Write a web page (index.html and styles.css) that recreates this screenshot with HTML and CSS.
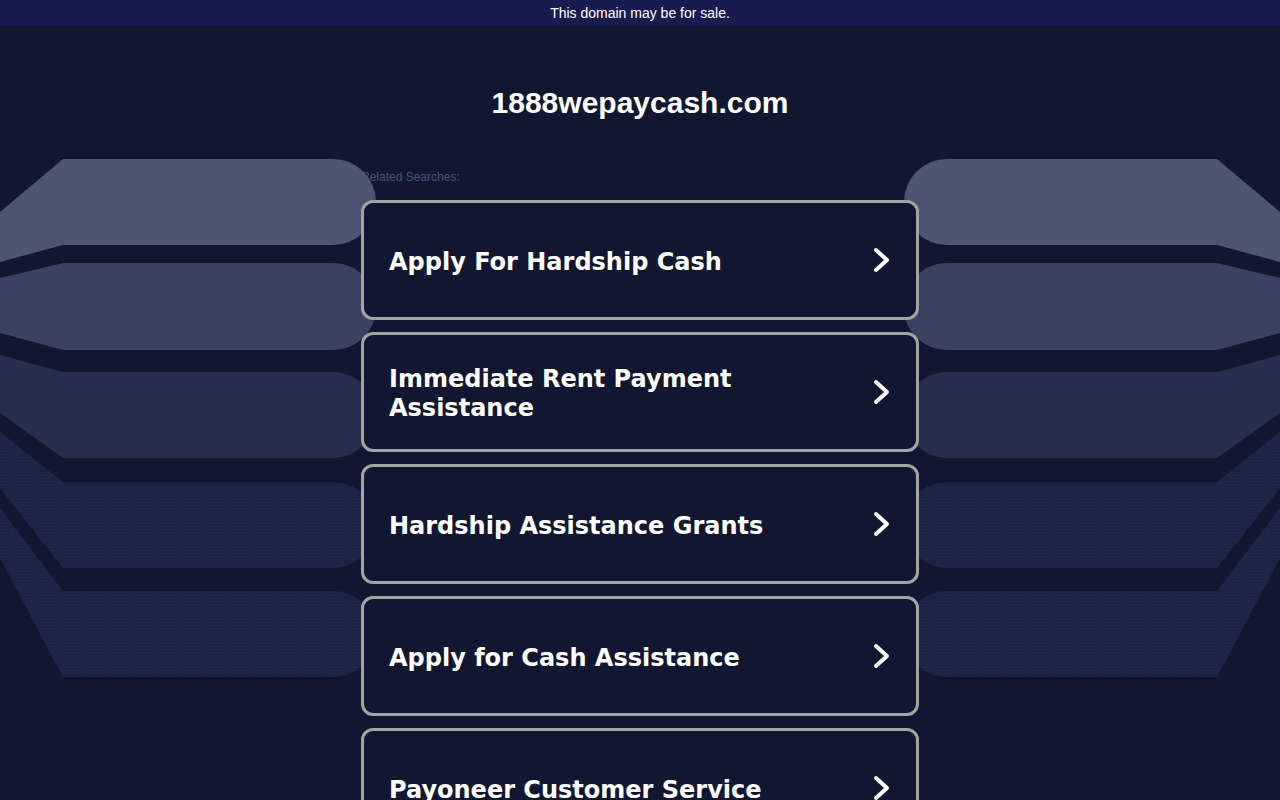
FILE: index.html
```html
<!DOCTYPE html>
<html lang="en">
<head>
<meta charset="utf-8">
<title>1888wepaycash.com</title>
<link rel="stylesheet" href="styles.css">
</head>
<body>
<svg class="backdrop" viewBox="0 0 1280 800" width="1280" height="800" aria-hidden="true">
  <defs>
    <pattern id="dots" width="3" height="3" patternUnits="userSpaceOnUse">
      <rect width="3" height="3" fill="#1b2447"/>
      <rect x="1" y="1" width="1" height="1" fill="#222b52"/>
    </pattern>
    <g id="bands">
      <path d="M0,212 L63,159 L333,159 A43,43 0 0 1 333,245 L63,245 L0,262 Z" fill="#4c5673"/>
      <path d="M0,278 L63,263 L333,263 A43,43 0 0 1 333,350 L63,350 L0,333 Z" fill="#3a4261"/>
      <path d="M0,355 L63,372 L333,372 A43,43 0 0 1 333,458 L63,458 L0,413 Z" fill="#272f4e"/>
      <path d="M0,432 L63,482 L333,482 A43,43 0 0 1 333,568 L63,568 L0,488 Z" fill="url(#dots)"/>
      <path d="M0,508 L63,591 L333,591 A43,43 0 0 1 333,677 L63,677 L0,558 Z" fill="url(#dots)"/>
    </g>
  </defs>
  <use href="#bands"/>
  <use href="#bands" transform="translate(1280,0) scale(-1,1)"/>
</svg>

<div class="topbar">This domain may be for sale.</div>

<h1 class="title">1888wepaycash.com</h1>

<div class="related">Related Searches:</div>

<div class="cards">
  <a class="card" href="#"><span class="label">Apply For Hardship Cash</span><svg class="chev" viewBox="0 0 20 30" width="20" height="30"><polyline points="4,5 15,15 4,25"/></svg></a>
  <a class="card" href="#"><span class="label">Immediate Rent Payment Assistance</span><svg class="chev" viewBox="0 0 20 30" width="20" height="30"><polyline points="4,5 15,15 4,25"/></svg></a>
  <a class="card" href="#"><span class="label">Hardship Assistance Grants</span><svg class="chev" viewBox="0 0 20 30" width="20" height="30"><polyline points="4,5 15,15 4,25"/></svg></a>
  <a class="card" href="#"><span class="label">Apply for Cash Assistance</span><svg class="chev" viewBox="0 0 20 30" width="20" height="30"><polyline points="4,5 15,15 4,25"/></svg></a>
  <a class="card" href="#"><span class="label">Payoneer Customer Service</span><svg class="chev" viewBox="0 0 20 30" width="20" height="30"><polyline points="4,5 15,15 4,25"/></svg></a>
</div>
</body>
</html>
```
FILE: styles.css
```css
html {
  overflow: hidden;
}
body {
  margin: 0;
  background: #111730;
  font-family: "Liberation Sans", Arial, sans-serif;
  color: #fff;
  min-height: 800px;
}
.backdrop {
  position: absolute;
  top: 0;
  left: 0;
  pointer-events: none;
}
.topbar {
  position: relative;
  height: 26px;
  line-height: 26px;
  background: #161b50;
  text-align: center;
  font-size: 14px;
  color: #fff;
}
.title {
  margin: 59px 0 0;
  text-align: center;
  font-size: 30px;
  line-height: 36px;
  font-weight: bold;
}
.related {
  width: 558px;
  margin: 49px auto 16px;
  font-size: 12px;
  line-height: 14px;
  color: #4a5478;
}
.cards {
  position: relative;
  z-index: 1;
  width: 558px;
  margin: 0 auto;
  display: flex;
  flex-direction: column;
  gap: 12px;
}
.card {
  box-sizing: border-box;
  height: 120px;
  border: 3px solid #a3a3a3;
  border-radius: 12px;
  background: #111730;
  display: flex;
  align-items: center;
  justify-content: space-between;
  padding: 0 24px 0 25px;
  text-decoration: none;
  color: #fff;
}
.label {
  font-family: "DejaVu Sans", Verdana, sans-serif;
  font-weight: bold;
  font-size: 24px;
  line-height: 29px;
  max-width: 440px;
  padding-top: 4px;
}
.chev {
  flex: none;
}
.chev polyline {
  fill: none;
  stroke: #fff;
  stroke-width: 4;
  stroke-linecap: round;
  stroke-linejoin: round;
}
```
